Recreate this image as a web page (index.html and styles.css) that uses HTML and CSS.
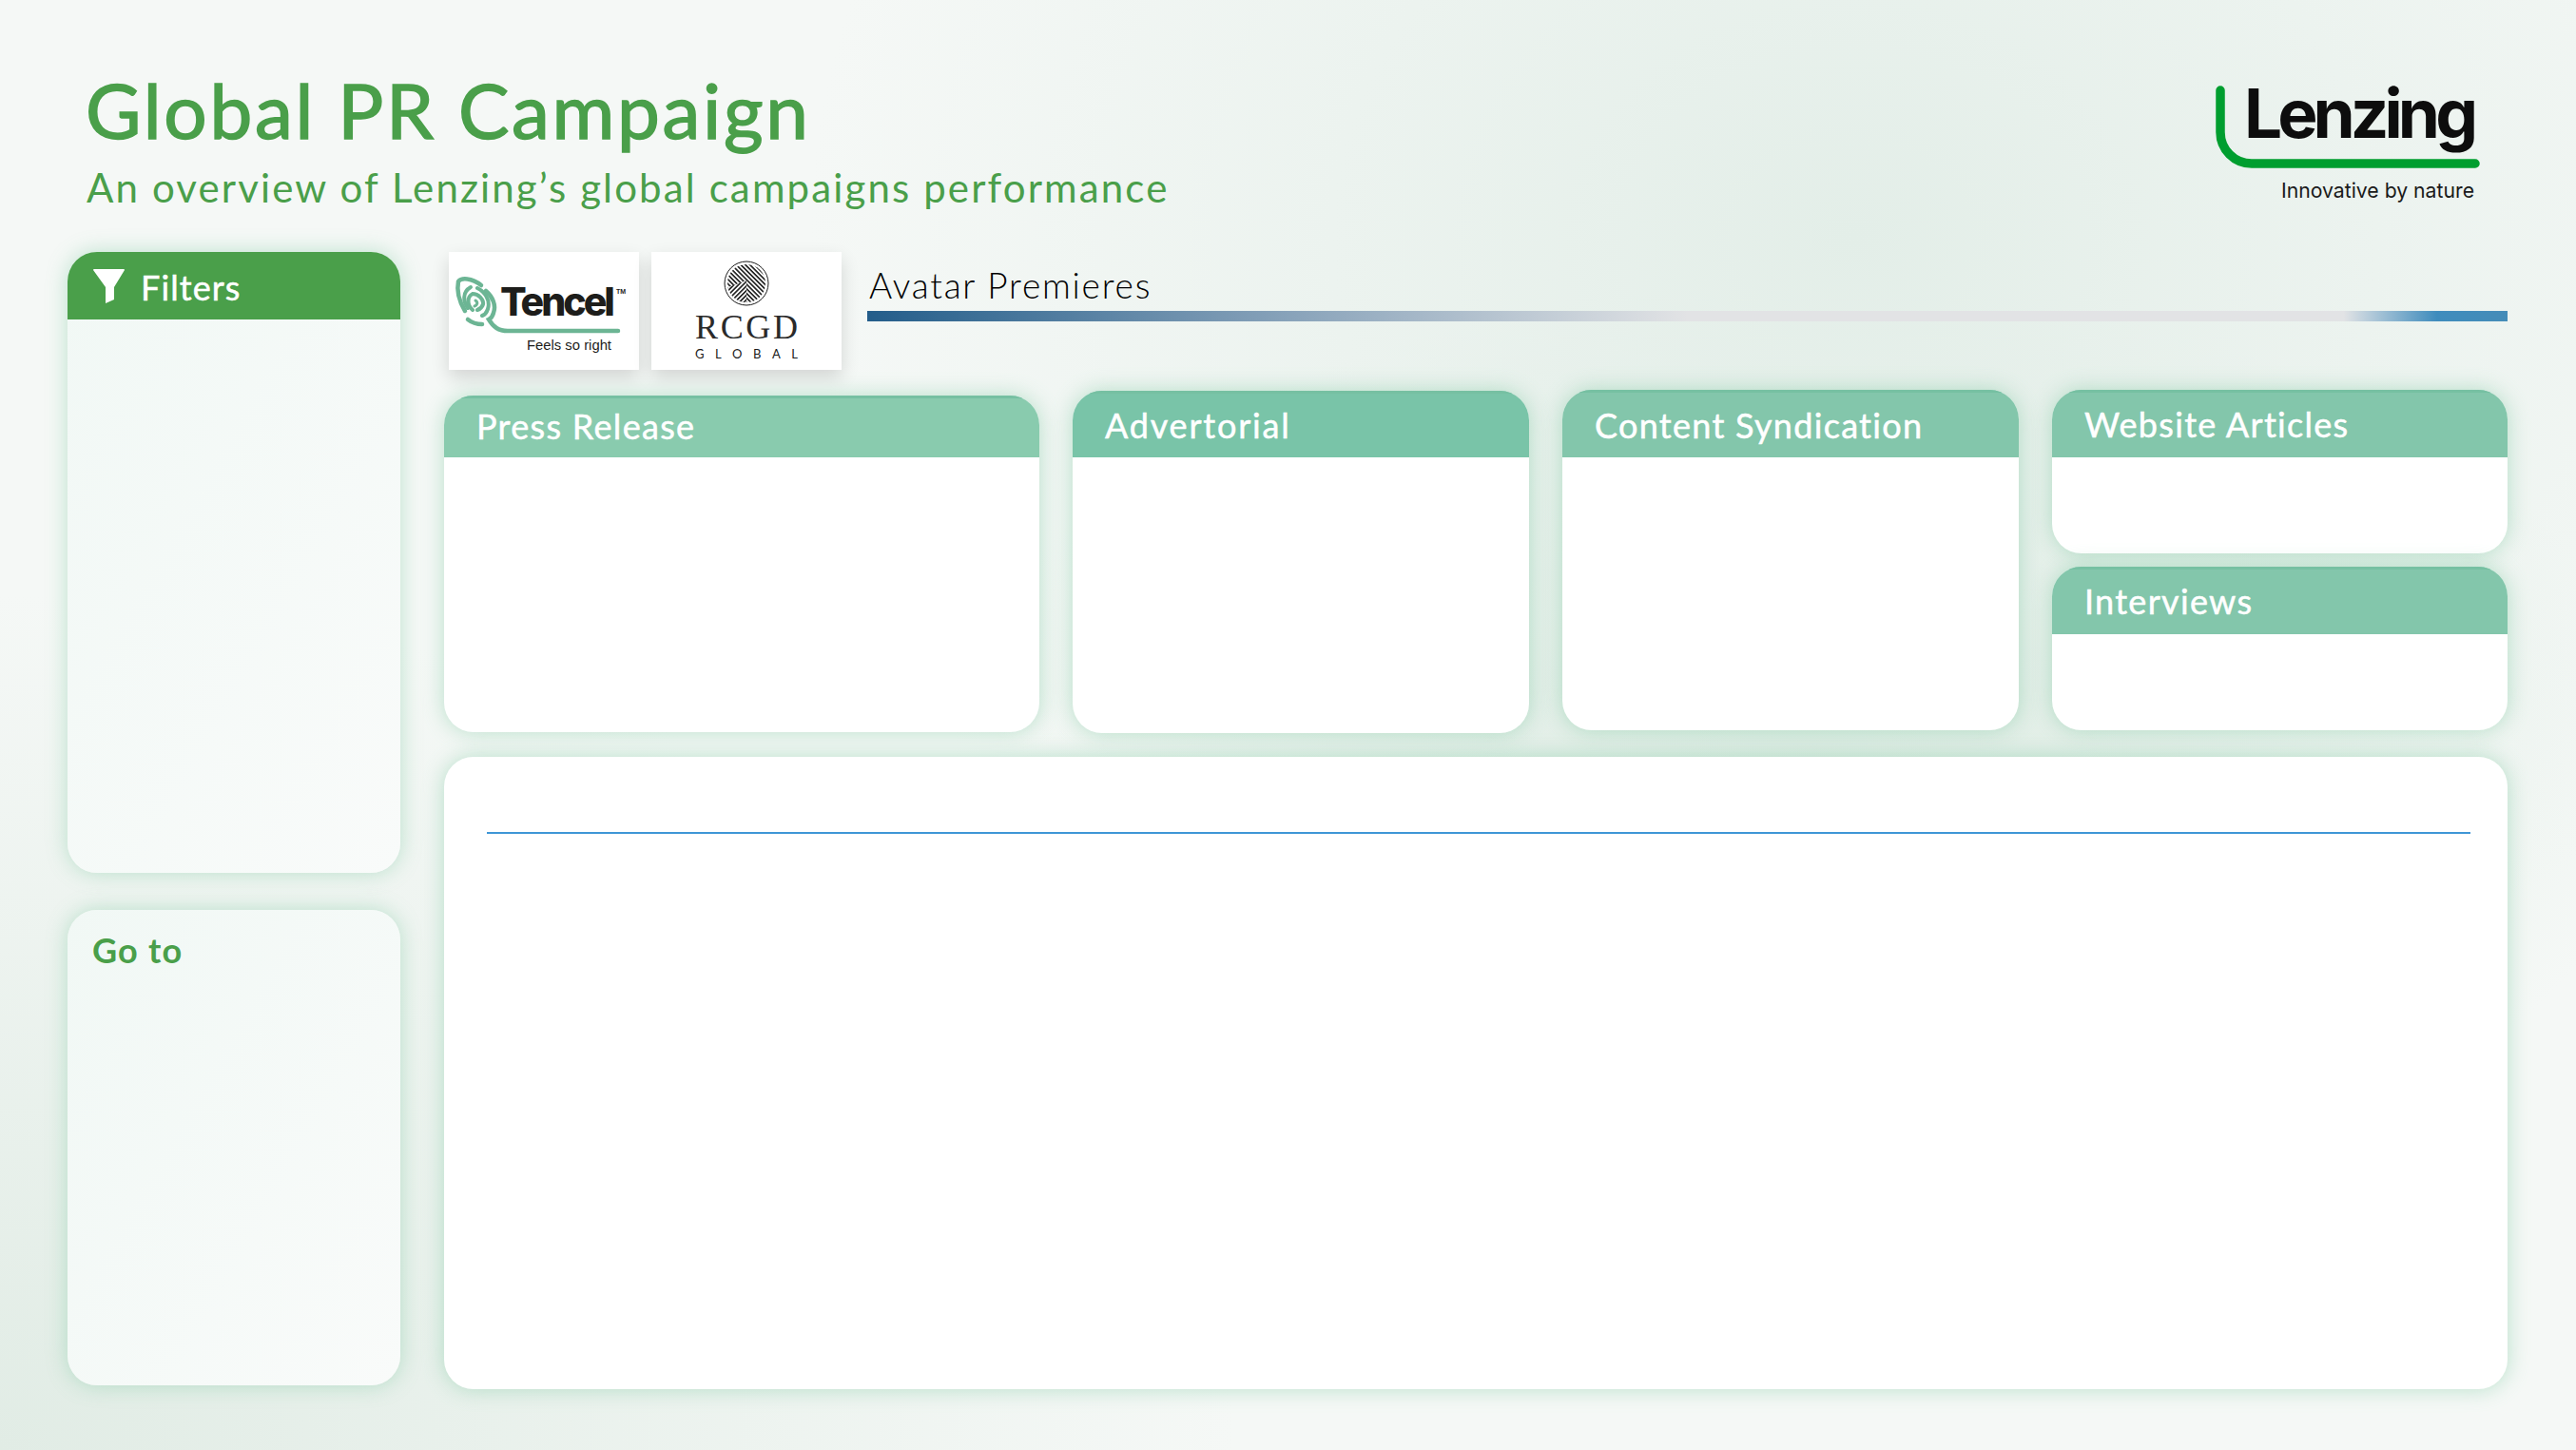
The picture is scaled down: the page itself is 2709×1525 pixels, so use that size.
FILE: index.html
```html
<!DOCTYPE html>
<html lang="en">
<head>
  <meta charset="UTF-8" />
  <title>Global PR Campaign</title>
  <link rel="stylesheet" href="styles.css">
</head>
<body>
  <header class="page-head">
    <div class="titles">
      <h1>Global PR Campaign</h1>
      <p class="subtitle">An overview of Lenzing’s global campaigns performance</p>
    </div>
    <svg class="lenzing-logo" viewBox="0 -20 300 150" width="300" height="150">
      <path d="M5 10 V54 A33 33 0 0 0 38 87 H273" fill="none" stroke="#009e2f" stroke-width="9.5" stroke-linecap="round"/>
      <text class="lenzing-word" x="30" y="60" textLength="243">Lenzing</text>
      <text class="lenzing-tag" x="69" y="123" textLength="203" lengthAdjust="spacingAndGlyphs">Innovative by nature</text>
    </svg>
  </header>

  <div class="content">
    <aside class="sidebar">
      <section class="panel panel-filters">
        <div class="panel-head">
          <svg class="funnel" viewBox="0 0 33 36" width="33" height="36">
            <path d="M0 1 Q0 0 1 0 H32 Q33 0 33 1 L22 19 V32 L13 36 V19 Z" fill="#fff"/>
          </svg>
          <span>Filters</span>
        </div>
      </section>
      <section class="panel panel-goto">
        <h3>Go to</h3>
      </section>
    </aside>

    <main class="main">
      <div class="brand-row">
        <div class="logo-box logo-tencel">
          <svg viewBox="0 0 200 124" width="200" height="124">
            <g fill="none" stroke="#6cb594" stroke-linecap="round">
              <path d="M17 62 C11 52 8 41 10 31 C13 27 24 27 34 35" stroke-width="4.5"/>
              <path d="M39 41 C46 47 50 56 47 64 C46 68 44 70 42 71 C47 79 52 83 62 83 H178" stroke-width="4.5"/>
              <path d="M20 71 C25 75 30 76 35 76" stroke-width="4.5"/>
              <path d="M20 59 C15 52 14 42 23 37" stroke-width="4"/>
              <path d="M30 38 C38 42 44 51 41 60 C40 63 38 66 35 67" stroke-width="4"/>
              <path d="M25 61 C19 56 19 47 25 44 C31 44 37 50 36 55 C35 58 33 60 30 61" stroke-width="4"/>
              <path d="M28 51 C31 53 30 56 27 57" stroke-width="3"/>
            </g>
            <text class="tencel-word" x="54" y="67" textLength="118" lengthAdjust="spacingAndGlyphs">Tencel</text>
            <text class="tencel-tm" x="176" y="44">TM</text>
            <text class="tencel-tag" x="82" y="103" textLength="89" lengthAdjust="spacingAndGlyphs">Feels so right</text>
          </svg>
        </div>
        <div class="logo-box logo-rcgd">
          <svg viewBox="0 0 200 124" width="200" height="124">
            <defs>
              <clipPath id="rcgd-disc"><circle cx="100" cy="33" r="20"/></clipPath>
              <pattern id="rcgd-hatch" width="3.4" height="3.4" patternUnits="userSpaceOnUse" patternTransform="rotate(45)">
                <rect width="3.4" height="1.6" fill="#1a1a1a"/>
              </pattern>
              <pattern id="rcgd-hatch2" width="3.4" height="3.4" patternUnits="userSpaceOnUse" patternTransform="rotate(-45)">
                <rect width="3.4" height="1.6" fill="#1a1a1a"/>
              </pattern>
            </defs>
            <g clip-path="url(#rcgd-disc)">
              <rect x="78" y="11" width="44" height="44" fill="url(#rcgd-hatch)"/>
              <path d="M78 38 L100 30 V55 H78 Z" fill="#fff"/>
              <path d="M78 38 L100 30 V55 H78 Z" fill="url(#rcgd-hatch2)"/>
            </g>
            <circle cx="100" cy="33" r="23" fill="none" stroke="#1a1a1a" stroke-width="1"/>
            <text class="rcgd-word" x="46" y="91" textLength="108">RCGD</text>
            <text class="rcgd-sub" x="46" y="112" textLength="108">GLOBAL</text>
          </svg>
        </div>
        <div class="brand-title">
          <span>Avatar Premieres</span>
          <div class="brand-bar"></div>
        </div>
      </div>

      <div class="cards">
        <section class="card card-press">
          <h3 class="card-head">Press Release</h3>
        </section>
        <section class="card card-advert">
          <h3 class="card-head">Advertorial</h3>
        </section>
        <section class="card card-synd">
          <h3 class="card-head">Content Syndication</h3>
        </section>
        <div class="card-stack">
          <section class="card card-small">
            <h3 class="card-head">Website Articles</h3>
          </section>
          <section class="card card-small">
            <h3 class="card-head">Interviews</h3>
          </section>
        </div>
      </div>

      <section class="card card-chart">
        <div class="chart-rule"></div>
      </section>
    </main>
  </div>
</body>
</html>
```

FILE: styles.css
```css
* {
  box-sizing: border-box;
}
html, body {
  margin: 0;
  padding: 0;
}
body {
  width: 2709px;
  height: 1525px;
  overflow: hidden;
  font-family: 'Lato', 'Open Sans', sans-serif;
  color: #4a9f4a;
  background:
    radial-gradient(ellipse 1100px 900px at 1950px 250px, #e3eee8 0%, rgba(227,238,232,0) 100%),
    radial-gradient(ellipse 1300px 900px at 0px 1525px, #e1ece5 0%, rgba(225,236,229,0) 100%),
    radial-gradient(ellipse 900px 500px at 1900px 800px, #dcebe2 0%, rgba(220,235,226,0) 100%),
    #f5f8f6;
}

/* Header */
.page-head {
  display: flex;
  justify-content: space-between;
  height: 265px;
  padding: 60px 79px 0 90px;
}
h1 {
  margin: 0;
  font-size: 80px;
  font-weight: 400;
  line-height: 110px;
  letter-spacing: 2.7px;
  -webkit-text-stroke: 1.5px #4a9f4a;
}
.subtitle {
  margin: 0 0 0 1px;
  font-size: 42px;
  line-height: 54px;
  letter-spacing: 2.13px;
}
.lenzing-logo {
  margin-top: 5px;
}
.lenzing-word {
  font-family: 'Inter', sans-serif;
  font-size: 71px;
  font-weight: 700;
  letter-spacing: -3px;
  fill: #0d0d0d;
}
.lenzing-tag {
  font-family: 'Inter', sans-serif;
  font-size: 22px;
  fill: #1a1a1a;
}

/* Layout */
.content {
  display: flex;
  gap: 46px;
  padding: 0 72px 0 71px;
}
.sidebar {
  width: 350px;
  display: flex;
  flex-direction: column;
  gap: 39px;
}
.main {
  flex: 1;
}

/* Side panels */
.panel {
  border-radius: 31px;
  overflow: hidden;
  background: linear-gradient(120deg, #f1f8f5, #f9fbfa);
  box-shadow: 0 0 22px rgba(110, 195, 150, 0.42);
}
.panel-filters {
  height: 653px;
}
.panel-goto {
  height: 500px;
  padding: 19px 26px;
}
.panel-head {
  height: 71px;
  display: flex;
  align-items: center;
  gap: 17px;
  padding-left: 27px;
  background: #4a9f4a;
  color: #fff;
  font-size: 36px;
  letter-spacing: 1.1px;
  -webkit-text-stroke: 0.5px #fff;
}
.panel-head span {
  padding-top: 2px;
}
.funnel {
  flex: none;
}
.panel-goto h3 {
  margin: 0;
  font-size: 36px;
  font-weight: 700;
  line-height: 46px;
  letter-spacing: 1.2px;
}

/* Brand row */
.brand-row {
  display: flex;
  align-items: flex-start;
  gap: 13px;
  height: 145px;
  padding-left: 5px;
}
.logo-box {
  width: 200px;
  height: 124px;
  background: #fff;
  box-shadow: 0 8px 18px rgba(0, 0, 0, 0.14);
}
.logo-box svg {
  display: block;
}
.tencel-word {
  font-family: 'Inter', sans-serif;
  font-size: 41px;
  font-weight: 800;
  letter-spacing: -3px;
  fill: #1d1d1b;
}
.tencel-tm {
  font-family: 'Liberation Sans', sans-serif;
  font-size: 7px;
  font-weight: 700;
  fill: #1d1d1b;
}
.tencel-tag {
  font-family: 'Liberation Sans', sans-serif;
  font-size: 15px;
  fill: #1d1d1b;
}
.rcgd-word {
  font-family: 'Liberation Serif', serif;
  font-size: 36px;
  fill: #2a2a2a;
}
.rcgd-sub {
  font-family: 'Lato', sans-serif;
  font-size: 13px;
  fill: #1a1a1a;
}
.brand-title {
  flex: 1;
  margin-left: 16px;
}
.brand-title span {
  display: block;
  height: 62px;
  padding-top: 12px;
  font-size: 37px;
  font-weight: 300;
  line-height: 46px;
  letter-spacing: 1.8px;
  color: #000;
}
.brand-bar {
  height: 11px;
  margin-left: -2px;
  background: linear-gradient(90deg, #235d8a 0%, #7c9ab4 22.5%, #e2e3e5 50%, #e2e3e5 90%, #3f8cbd 95.7%, #458cb8 100%);
}

/* Cards */
.cards {
  display: grid;
  grid-template-columns: 626px 480px 480px 479px;
  gap: 35px;
  height: 386px;
}
.card {
  border-radius: 31px;
  overflow: hidden;
  background: #fff;
  box-shadow: 0 0 22px rgba(110, 195, 150, 0.45);
}
.card-head {
  margin: 0;
  height: 71px;
  padding-left: 34px;
  background: #83c6ab;
  border-top: 3px solid #76c0a2;
  color: #fff;
  font-size: 36px;
  font-weight: 400;
  line-height: 66px;
  letter-spacing: 1.3px;
  -webkit-text-stroke: 0.5px #fff;
}
.card-press {
  height: 354px;
  margin-top: 6px;
}
.card-press .card-head {
  height: 65px;
  background: #89cbae;
  line-height: 58px;
}
.card-advert {
  height: 360px;
  margin-top: 1px;
}
.card-advert .card-head {
  height: 70px;
  background: #79c4a8;
  line-height: 66px;
  letter-spacing: 1.8px;
}
.card-synd {
  height: 358px;
}
.card-synd .card-head {
  line-height: 68px;
}
.card-stack {
  display: flex;
  flex-direction: column;
  gap: 14px;
}
.card-small {
  height: 172px;
}
.card-chart {
  height: 665px;
  padding: 79px 39px 0 45px;
}
.chart-rule {
  height: 2px;
  background: #3f96d6;
}
```
